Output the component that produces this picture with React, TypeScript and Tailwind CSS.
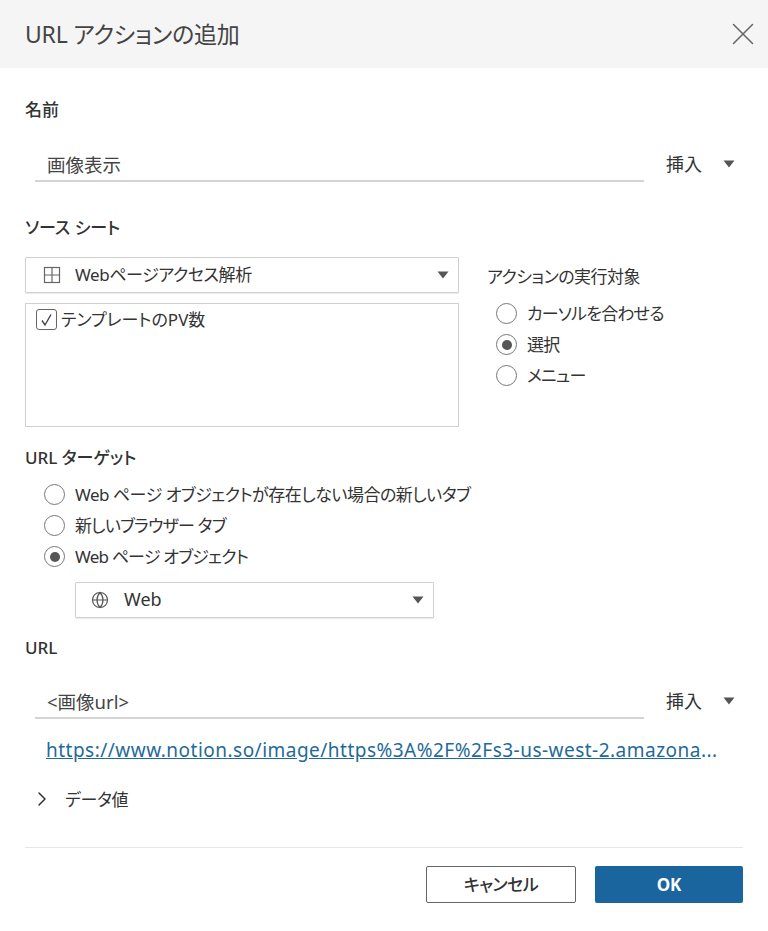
import React from "react";
import { X, ChevronRight, Globe } from "lucide-react";

const Caret = () => (
  <svg width="12" height="8" viewBox="0 0 12 8" className="shrink-0">
    <path d="M0.5 0.5h11L6 7.5z" fill="#555555" />
  </svg>
);

const Radio = ({ checked = false }: { checked?: boolean }) => (
  <span className="flex h-[21px] w-[21px] shrink-0 items-center justify-center rounded-full border border-[#777777] bg-white">
    {checked && <span className="h-[10px] w-[10px] rounded-full bg-[#555555]" />}
  </span>
);

const RadioRow = ({ label, checked, wide }: { label: string; checked?: boolean; wide?: boolean }) => (
  <div className="flex h-[31px] items-center gap-[10px]">
    <Radio checked={checked} />
    <span className={`-mt-[1px] text-[17px] leading-none text-[#333333] ${wide ? "tracking-[-0.5px]" : "tracking-[-0.8px]"}`}>
      {label}
    </span>
  </div>
);

const InsertInput = ({ value }: { value: string }) => (
  <div className="flex items-center">
    <div className="ml-[10px] flex h-[36px] w-[609px] items-center border-b-2 border-[#d4d4d4] pl-[12px] pt-[3px] text-[18.5px] text-[#444444]">
      {value}
    </div>
    <span className="ml-[22px] text-[18px] leading-none text-[#333333]">挿入</span>
    <span className="ml-[21px]">
      <Caret />
    </span>
  </div>
);

const Label = ({ children }: { children: React.ReactNode }) => (
  <div className="h-[20px] text-[17px] font-medium leading-[20px] text-[#333333]">{children}</div>
);

export default function App() {
  return (
    <div className="flex h-[931px] w-[768px] flex-col overflow-hidden bg-white font-['Noto_Sans','Noto_Sans_CJK_JP',sans-serif] [font-feature-settings:'palt']">
      {/* Header */}
      <div className="flex h-[68px] shrink-0 items-center justify-between bg-[#f5f5f5] pl-[25px] pr-[6px]">
        <span className="text-[23px] leading-none tracking-[-0.2px] text-[#444444]">URL アクションの追加</span>
        <X size={38} strokeWidth={1} className="-mt-[1px] text-[#666666]" />
      </div>

      <div className="flex flex-col px-[25px]">
        <div className="mt-[32px]">
          <Label>名前</Label>
        </div>
        <div className="mt-[26px]">
          <InsertInput value="画像表示" />
        </div>

        <div className="mt-[36px]">
          <Label>ソース シート</Label>
        </div>
        <div className="mt-[19px] flex">
          <div className="w-[434px]">
            <div className="flex h-[36px] items-center rounded-[1px] border border-[#d0d0d0] pl-[17px] pr-[9px] shadow-[0_1px_1px_rgba(0,0,0,0.08)]">
              <svg width="18" height="18" viewBox="0 0 18 18" fill="none" stroke="#666666" strokeWidth="1.2" className="shrink-0">
                <rect x="1.5" y="1.5" width="15" height="15" />
                <path d="M9 1.5v15M1.5 9h15" />
              </svg>
              <span className="-mt-[1px] ml-[14px] flex-1 text-[17px] leading-none tracking-[-0.4px] text-[#333333]">Webページアクセス解析</span>
              <Caret />
            </div>
            <div className="mt-[10px] h-[124px] border border-[#d0d0d0] pl-[10px] pt-[5px]">
              <div className="flex items-center gap-[4px]">
                <span className="flex h-[21px] w-[21px] items-center justify-center rounded-[3px] border border-[#666666]">
                  <svg width="13" height="14" viewBox="0 0 13 14" fill="none" stroke="#444444" strokeWidth="1.4">
                    <path d="M2 7.5l3 4.5 6-10.5" />
                  </svg>
                </span>
                <span className="text-[17px] leading-none text-[#333333]">テンプレートのPV数</span>
              </div>
            </div>
          </div>
          <div className="ml-[28px] flex flex-col">
            <div className="mt-[10px] h-[20px] text-[17px] leading-[20px] tracking-[-0.5px] text-[#333333]">アクションの実行対象</div>
            <div className="ml-[9px] mt-[11px] flex flex-col">
              <RadioRow label="カーソルを合わせる" />
              <RadioRow label="選択" checked />
              <RadioRow label="メニュー" />
            </div>
          </div>
        </div>

        <div className="mt-[21px]">
          <Label>URL ターゲット</Label>
        </div>
        <div className="ml-[19px] mt-[11px] flex flex-col">
          <RadioRow label="Web ページ オブジェクトが存在しない場合の新しいタブ" wide />
          <RadioRow label="新しいブラウザー タブ" />
          <RadioRow label="Web ページ オブジェクト" checked />
        </div>
        <div className="ml-[50px] mt-[10px] flex h-[36px] w-[359px] items-center rounded-[1px] border border-[#d0d0d0] pl-[15px] pr-[9px] shadow-[0_1px_1px_rgba(0,0,0,0.08)]">
          <Globe size={18} strokeWidth={1.6} className="shrink-0 text-[#555555]" />
          <span className="-mt-[2px] ml-[15px] flex-1 text-[18px] leading-none text-[#333333]">Web</span>
          <Caret />
        </div>

        <div className="mt-[20px]">
          <Label>URL</Label>
        </div>
        <div className="mt-[25px]">
          <InsertInput value="<画像url>" />
        </div>
        <div className="ml-[21px] mt-[21px] h-[20px] whitespace-nowrap text-[19px] leading-[20px] tracking-[0.48px] text-[#1f6a99]">
          <span className="underline">https://www.notion.so/image/https%3A%2F%2Fs3-us-west-2.amazona</span>
          <span>...</span>
        </div>
        <div className="mt-[29px] flex h-[20px] items-center">
          <ChevronRight size={24} strokeWidth={1.5} className="ml-[5px] text-[#333333]" />
          <span className="ml-[11px] text-[17px] leading-none tracking-[-0.3px] text-[#333333]">データ値</span>
        </div>

        <div className="mt-[38px] h-px bg-[#e6e6e6]" />

        {/* Footer buttons */}
        <div className="mt-[18px] flex justify-end gap-[19px]">
          <button className="h-[37px] w-[150px] rounded-[2px] border border-[#666666] bg-white text-[17px] font-medium tracking-[-0.5px] text-[#333333]">
            キャンセル
          </button>
          <button className="h-[37px] w-[148px] rounded-[2px] bg-[#1a659e] text-[17px] font-bold text-white">
            OK
          </button>
        </div>
      </div>
    </div>
  );
}
